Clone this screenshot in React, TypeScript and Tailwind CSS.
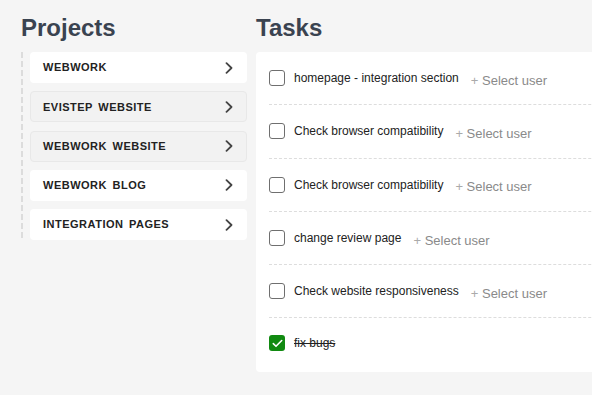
const projects = [
  { name: 'WEBWORK', active: false },
  { name: 'EVISTEP WEBSITE', active: true },
  { name: 'WEBWORK WEBSITE', active: true },
  { name: 'WEBWORK BLOG', active: false },
  { name: 'INTEGRATION PAGES', active: false },
];

const tasks = [
  { title: 'homepage - integration section', done: false },
  { title: 'Check browser compatibility', done: false },
  { title: 'Check browser compatibility', done: false },
  { title: 'change review page', done: false },
  { title: 'Check website responsiveness', done: false },
  { title: 'fix bugs', done: true },
];

function Chevron() {
  return (
    <svg width="8" height="12" viewBox="0 0 8 12" fill="none">
      <polyline points="1.5,1.2 6.5,6 1.5,10.8" stroke="#444" strokeWidth="1.8" strokeLinecap="round" strokeLinejoin="round" />
    </svg>
  );
}

function Checkbox({ checked }: { checked: boolean }) {
  if (checked) {
    return (
      <span className="w-4 h-4 shrink-0 rounded-[3px] bg-[#118a11] flex items-center justify-center">
        <svg width="11" height="9" viewBox="0 0 11 9" fill="none">
          <polyline points="1.3,4.6 4,7.3 9.7,1.5" stroke="#fff" strokeWidth="1.6" strokeLinecap="round" strokeLinejoin="round" />
        </svg>
      </span>
    );
  }
  return <span className="w-4 h-4 shrink-0 rounded-[3px] border border-[#6f6f6f] bg-white" />;
}

export default function App() {
  return (
    <div className="w-[592px] h-[395px] overflow-hidden bg-[#f5f5f5] flex font-['Liberation_Sans',Arial,sans-serif]">
      <section className="w-[256px] shrink-0 pl-[21px] pr-[9px] pt-[14px]">
        <h1 className="h-[28px] leading-[28px] text-[24px] font-bold text-[#3a4350] mb-[10px]">Projects</h1>
        <div className="flex">
          <div className="w-[2px] shrink-0 bg-[repeating-linear-gradient(to_bottom,#dcdcdc_0,#dcdcdc_6px,transparent_6px,transparent_9px)]" />
          <div className="flex-1 pl-[7px] flex flex-col gap-[8.25px]">
            {projects.map((p, i) => (
              <div
                key={i}
                className={[
                  'h-[31px] rounded-[4px] flex items-center justify-between',
                  p.active
                    ? 'bg-[#f2f2f2] border border-[#e8e8e8] pl-[12px] pr-[13px]'
                    : 'bg-white pl-[13px] pr-[14px]',
                ].join(' ')}
              >
                <span className="text-[11px] font-bold tracking-[0.5px] [word-spacing:2px] text-[#222]">{p.name}</span>
                <Chevron />
              </div>
            ))}
          </div>
        </div>
      </section>

      <section className="flex-1 min-w-0 pt-[14px]">
        <h1 className="h-[28px] leading-[28px] text-[24px] font-bold text-[#3a4350] mb-[10px]">Tasks</h1>
        <div className="w-[420px] bg-white rounded-[4px] pb-[4px]">
          {tasks.map((t, i) => (
            <div
              key={i}
              className={[
                'ml-[13px] flex items-center',
                i < tasks.length - 1 ? 'h-[53.25px] border-b border-dashed border-[#dddddd]' : 'h-[50px]',
              ].join(' ')}
            >
              <Checkbox checked={t.done} />
              <span
                className={[
                  'ml-[9px] text-[12px] text-[#222]',
                  t.done ? 'line-through decoration-[#222]' : '',
                ].join(' ')}
              >
                {t.title}
              </span>
              {!t.done && (
                <span className="ml-[12px] mt-[5px] text-[13px] text-[#8a8a8a]">
                  <span className="text-[#aaa]">+</span> Select user
                </span>
              )}
            </div>
          ))}
        </div>
      </section>
    </div>
  );
}
